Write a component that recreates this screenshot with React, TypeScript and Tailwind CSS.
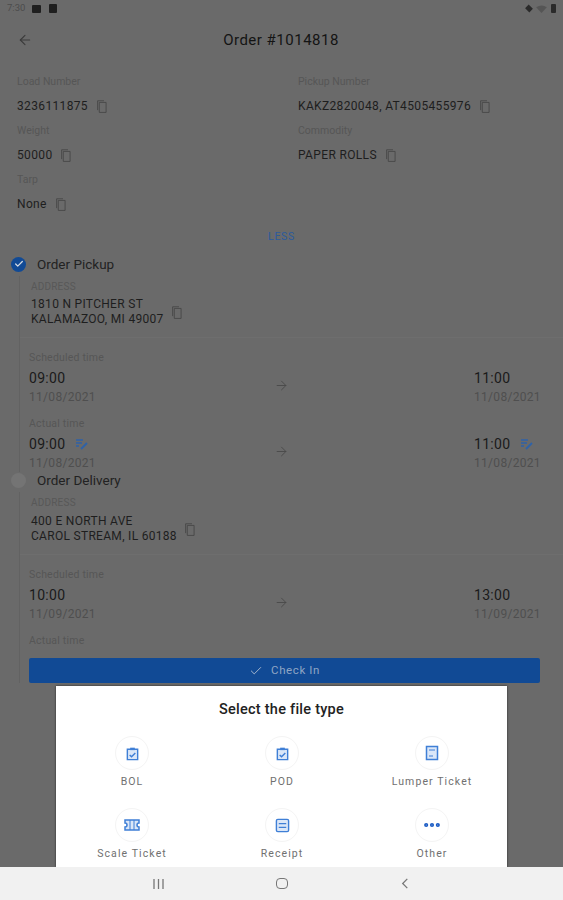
import { ArrowLeft, ArrowRight, Check, MoreHorizontal } from "lucide-react";

const FONT = "font-['Roboto','Liberation_Sans',sans-serif]";

function CopyIcon() {
  return (
    <svg viewBox="0 0 11 14" className="h-[13px] w-[10px]" fill="none" stroke="#474747" strokeWidth="1">
      <path d="M2.500 2.500h7.500v11h-7.500z" />
      <path d="M0.700 11V0.700h7" />
    </svg>
  );
}

function Info({ label, value }: { label: string; value: string }) {
  return (
    <div className="h-[49px]">
      <div className="flex h-[25px] items-center text-[10.5px] text-[#565656]">{label}</div>
      <div className="flex h-[24px] items-center gap-[9px] text-[12px] tracking-[0.35px] text-[#1e1e1e]">
        {value}
        <CopyIcon />
      </div>
    </div>
  );
}

function EditedIcon() {
  return (
    <svg viewBox="0 0 14 12" className="h-[12px] w-[14px]" fill="none" stroke="#2f62a8" strokeWidth="1.4">
      <path d="M1 2h7M1 5h6M1 8h3" />
      <path d="M6 11l6-6" strokeWidth="2" />
    </svg>
  );
}

function TimeCol({ time, date, edited, wide }: { time: string; date: string; edited?: boolean; wide?: boolean }) {
  return (
    <div className={wide ? "w-[66px]" : "w-[237px]"}>
      <div className="flex h-[20px] items-center gap-[10px] text-[14px] tracking-[0.3px] text-[#1a1a1a]">
        {time}
        {edited && <EditedIcon />}
      </div>
      <div className="flex h-[18px] items-center text-[12px] tracking-[0.3px] text-[#4f4f4f]">{date}</div>
    </div>
  );
}

function TimeRow({ start, end, date, edited }: { start: string; end: string; date: string; edited?: boolean }) {
  return (
    <div className="flex h-[38px] items-center">
      <TimeCol time={start} date={date} edited={edited} />
      <div className="flex w-[208px] justify-start pb-[4px] pl-[8px]">
        <ArrowRight className="h-[15px] w-[15px] text-[#4a4a4a]" strokeWidth={1.5} />
      </div>
      <TimeCol time={end} date={date} edited={edited} wide />
    </div>
  );
}

function Stop({
  title,
  done,
  lines,
  children,
}: {
  title: string;
  done?: boolean;
  lines: [string, string];
  children: React.ReactNode;
}) {
  return (
    <section>
      <div className="flex h-[24px] items-center gap-[11px] pl-[11px]">
        {done ? (
          <span className="flex h-[15px] w-[15px] items-center justify-center rounded-full bg-[#114a95]">
            <Check className="h-[10px] w-[10px] text-[#d5dbe4]" strokeWidth={3} />
          </span>
        ) : (
          <span className="h-[15px] w-[15px] rounded-full bg-[#747474]" />
        )}
        <span className="text-[13.5px] text-[#222]">{title}</span>
      </div>
      <div className="ml-[19px] border-l border-[#626262]">
        <div className="border-b border-[#6e6e6e] pb-[10px] pl-[11px]">
          <div
            className={`flex items-center pb-[1px] text-[10px] tracking-[0.2px] text-[#585858] ${
              done ? "h-[21px]" : "h-[22px]"
            }`}
          >
            ADDRESS
          </div>
          <div className="flex items-center gap-[8px]">
            <div className="text-[12px] leading-[15px] tracking-[0.3px] text-[#1e1e1e]">
              {lines[0]}
              <br />
              {lines[1]}
            </div>
            <CopyIcon />
          </div>
        </div>
        <div className="pl-[9px] pt-[10px]">{children}</div>
      </div>
    </section>
  );
}

function SmallLabel({ children }: { children: React.ReactNode }) {
  return <div className="flex h-[20px] items-center text-[10.5px] tracking-[0.2px] text-[#565656]">{children}</div>;
}

function Tile({ label, children }: { label: string; children: React.ReactNode }) {
  return (
    <div className="flex flex-col items-center">
      <div className="flex h-[34px] w-[34px] items-center justify-center rounded-full border border-[#f4f4f4]">
        {children}
      </div>
      <div className="mt-[5px] text-[10.5px] leading-[14px] tracking-[1.1px] text-[#707070]">{label}</div>
    </div>
  );
}

const clip = (
  <svg viewBox="0 0 16 16" className="h-[15px] w-[15px]" fill="#dbe7f8" stroke="#3f7fd6" strokeWidth="1.5">
    <path d="M2.500 3.500h11v11h-11z" />
    <path d="M5.500 1.800h5v2.600h-5z" fill="#3f7fd6" stroke="none" />
    <path d="M5 9.500l2 2 4-4" fill="none" />
  </svg>
);

export default function App() {
  return (
    <div className={`relative h-[900px] w-[563px] overflow-hidden bg-[#6a6a6a] ${FONT}`}>
      <header className="flex h-[17px] items-center justify-between px-[7px]">
        <div className="flex items-center gap-[7px]">
          <span className="text-[9.5px] text-[#4c4c4c]">7:30</span>
          <span className="h-[8px] w-[9px] rounded-[1px] bg-[#1f1f1f]" />
          <span className="ml-[1px] h-[9px] w-[8px] rounded-[1px] bg-[#1f1f1f]" />
        </div>
        <div className="flex items-center gap-[4px]">
          <span className="h-[5px] w-[6px] rotate-45 bg-[#2a2a2a]" />
          <svg viewBox="0 0 12 9" className="h-[8px] w-[11px]" fill="#555">
            <path d="M0 2.500Q6-1.500 12 2.500L6 9z" />
          </svg>
          <span className="h-[9px] w-[5px] rounded-[1px] bg-[#2a2a2a]" />
        </div>
      </header>

      <div className="relative flex h-[46px] items-center justify-center pr-[1px]">
        <ArrowLeft className="absolute left-[17px] h-[16px] w-[16px] text-[#3a3a3a]" strokeWidth={1.6} />
        <h1 className="text-[15px] tracking-[0.5px] text-[#141414]">Order #1014818</h1>
      </div>

      <div className="grid grid-cols-[281px_1fr] pl-[17px] pt-[6px]">
        <Info label="Load Number" value="3236111875" />
        <Info label="Pickup Number" value="KAKZ2820048, AT4505455976" />
        <Info label="Weight" value="50000" />
        <Info label="Commodity" value="PAPER ROLLS" />
        <Info label="Tarp" value="None" />
      </div>

      <div className="flex h-[28px] items-end justify-center text-[10.5px] leading-[14px] tracking-[0.7px] text-[#2c5a9c]">
        LESS
      </div>

      <div className="mt-[8px] flex flex-col">
        <Stop title="Order Pickup" done lines={["1810 N PITCHER ST", "KALAMAZOO, MI 49007"]}>
          <SmallLabel>Scheduled time</SmallLabel>
          <TimeRow start="09:00" end="11:00" date="11/08/2021" />
          <div className="h-[8px]" />
          <SmallLabel>Actual time</SmallLabel>
          <TimeRow start="09:00" end="11:00" date="11/08/2021" edited />
        </Stop>
        <div className="-mt-[4px]">
          <Stop title="Order Delivery" lines={["400 E NORTH AVE", "CAROL STREAM, IL 60188"]}>
            <SmallLabel>Scheduled time</SmallLabel>
            <TimeRow start="10:00" end="13:00" date="11/09/2021" />
            <div className="h-[8px]" />
            <SmallLabel>Actual time</SmallLabel>
            <div className="h-[7px]" />
            <div className="flex h-[25px] w-[511px] items-center justify-center gap-[8px] rounded-[2px] bg-[#114a95] text-[11.5px] tracking-[0.6px] text-[#8fa5c4]">
              <Check className="h-[14px] w-[14px] text-[#b9c5d6]" strokeWidth={1.5} />
              Check In
            </div>
          </Stop>
        </div>
      </div>

      <div className="absolute left-[56px] top-[686px] h-[181px] w-[451px] bg-white shadow-[0_0_2px_#222]">
        <h2 className="pt-[14px] text-center text-[14.5px] font-medium leading-[20px] tracking-[0.25px] text-[#222]">
          Select the file type
        </h2>
        <div className="mt-[16px] grid grid-cols-[150px_150px_150px] gap-y-[19px] pl-[1px]">
          <Tile label="BOL">{clip}</Tile>
          <Tile label="POD">{clip}</Tile>
          <Tile label="Lumper Ticket">
            <svg viewBox="0 0 16 16" className="h-[16px] w-[16px]" fill="#dbe7f8" stroke="#3f7fd6" strokeWidth="1.5">
              <path d="M2.500 1.500h11v13h-11z" />
              <path d="M5 5h6M5 11h4" strokeWidth="1" />
            </svg>
          </Tile>
          <Tile label="Scale Ticket">
            <svg viewBox="0 0 16 14" className="h-[14px] w-[16px]" fill="#dbe7f8" stroke="#3f7fd6" strokeWidth="1.5">
              <path d="M1 2h14v3a2 2 0 0 0 0 4v3H1V9a2 2 0 0 0 0-4z" />
              <path d="M6 2v10M10 2v10" strokeWidth="1" />
            </svg>
          </Tile>
          <Tile label="Receipt">
            <svg viewBox="0 0 16 16" className="h-[15px] w-[15px]" fill="#dbe7f8" stroke="#3f7fd6" strokeWidth="1.5">
              <rect x="1.500" y="1.500" width="13" height="13" rx="1.500" />
              <path d="M4 6h8M4 10h8" strokeWidth="1.2" />
            </svg>
          </Tile>
          <Tile label="Other">
            <MoreHorizontal className="h-[20px] w-[20px] text-[#1c5cc4]" strokeWidth={3} />
          </Tile>
        </div>
      </div>

      <nav className="absolute inset-x-0 bottom-0 grid h-[33px] grid-cols-[247px_70px_1fr] items-center bg-[#f1f1f1] text-[#777]">
        <div className="flex justify-end pr-[83px]">
          <svg viewBox="0 0 11 10" className="h-[10px] w-[11px]" stroke="#777" strokeWidth="1.3">
            <path d="M1 0v10M5.500 0v10M10 0v10" />
          </svg>
        </div>
        <div className="flex justify-center">
          <span className="h-[11px] w-[12px] rounded-[4px] border-[1.5px] border-[#777]" />
        </div>
        <div className="pl-[84px]">
          <svg viewBox="0 0 8 12" className="h-[11px] w-[8px]" fill="none" stroke="#777" strokeWidth="1.4">
            <path d="M6.500 1L1.500 6l5 5" />
          </svg>
        </div>
      </nav>
    </div>
  );
}
